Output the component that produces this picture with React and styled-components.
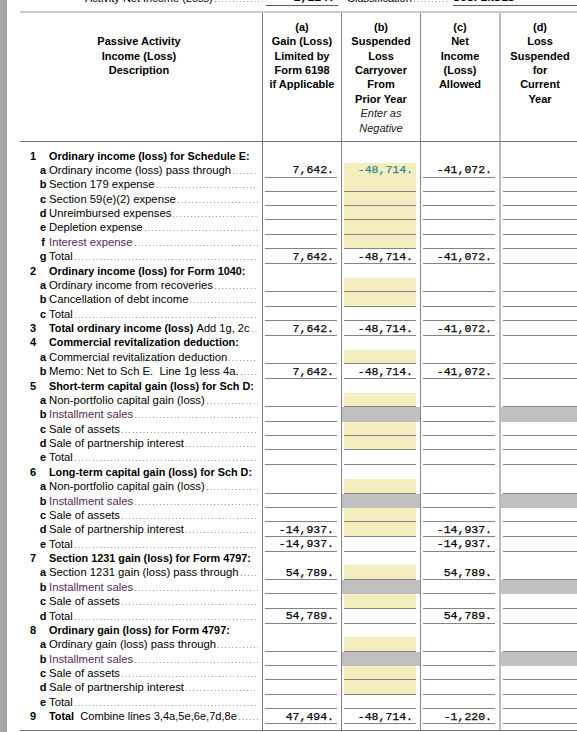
import React from "react";
import styled, { createGlobalStyle } from "styled-components";

const COLS = "242px 79px 79px 79px 80px";
const ROW_H = 14.38;

const SEP = [
  "none",
  "1px solid #7c7c7c",
  "1px solid #858585",
  "1px solid #858585",
  "2px solid #bdbdbd",
];

const BG = { L: "transparent", Y: "#f4eebf", G: "#c0c0c0" };

const STD = "LYLL";
const TOT = "LLLL";
const INST = "LGLG";
const TOTV = ["7,642.", "-48,714.", "-41,072."];

const ROWS = [
  { n: "1", t: "Ordinary income (loss) for Schedule E:" },
  { l: "a", t: "Ordinary income (loss) pass through", k: STD, v: TOTV, teal: 1 },
  { l: "b", t: "Section 179 expense", k: STD },
  { l: "c", t: "Section 59(e)(2) expense", k: STD },
  { l: "d", t: "Unreimbursed expenses", k: STD },
  { l: "e", t: "Depletion expense", k: STD },
  { l: "f", t: "Interest expense", k: STD, purple: true },
  { l: "g", t: "Total", k: TOT, v: TOTV },
  { n: "2", t: "Ordinary income (loss) for Form 1040:" },
  { l: "a", t: "Ordinary income from recoveries", k: STD },
  { l: "b", t: "Cancellation of debt income", k: STD },
  { l: "c", t: "Total", k: TOT },
  { n: "3", t: "Total ordinary income (loss)", note: "\u00a0Add 1g, 2c", k: TOT, v: TOTV },
  { n: "4", t: "Commercial revitalization deduction:" },
  { l: "a", t: "Commercial revitalization deduction", k: STD },
  { l: "b", t: "Memo: Net to Sch E.\u00a0 Line 1g less 4a.", k: TOT, v: TOTV },
  { n: "5", t: "Short-term capital gain (loss) for Sch D:" },
  { l: "a", t: "Non-portfolio capital gain (loss)", k: STD },
  { l: "b", t: "Installment sales", k: INST, purple: true },
  { l: "c", t: "Sale of assets", k: STD },
  { l: "d", t: "Sale of partnership interest", k: STD },
  { l: "e", t: "Total", k: TOT },
  { n: "6", t: "Long-term capital gain (loss) for Sch D:" },
  { l: "a", t: "Non-portfolio capital gain (loss)", k: STD },
  { l: "b", t: "Installment sales", k: INST, purple: true },
  { l: "c", t: "Sale of assets", k: STD },
  { l: "d", t: "Sale of partnership interest", k: STD, v: ["-14,937.", "", "-14,937."] },
  { l: "e", t: "Total", k: TOT, v: ["-14,937.", "", "-14,937."] },
  { n: "7", t: "Section 1231 gain (loss) for Form 4797:" },
  { l: "a", t: "Section 1231 gain (loss) pass through", k: STD, v: ["54,789.", "", "54,789."] },
  { l: "b", t: "Installment sales", k: INST, purple: true },
  { l: "c", t: "Sale of assets", k: STD },
  { l: "d", t: "Total", k: TOT, v: ["54,789.", "", "54,789."] },
  { n: "8", t: "Ordinary gain (loss) for Form 4797:" },
  { l: "a", t: "Ordinary gain (loss) pass through", k: STD },
  { l: "b", t: "Installment sales", k: INST, purple: true },
  { l: "c", t: "Sale of assets", k: STD },
  { l: "d", t: "Sale of partnership interest", k: STD },
  { l: "e", t: "Total", k: TOT },
  { n: "9", t: "Total", note: "\u00a0 Combine lines 3,4a,5e,6e,7d,8e", k: TOT, v: ["47,494.", "-48,714.", "-1,220."] },
];

const HEADS = [
  { lines: ["Passive Activity", "Income (Loss)", "Description"] },
  { lines: ["(a)", "Gain (Loss)", "Limited by", "Form 6198", "if Applicable"] },
  { lines: ["(b)", "Suspended", "Loss", "Carryover", "From", "Prior Year"], note: ["Enter as", "Negative"] },
  { lines: ["(c)", "Net", "Income", "(Loss)", "Allowed"] },
  { lines: ["(d)", "Loss", "Suspended", "for", "Current", "Year"] },
];

const GlobalStyle = createGlobalStyle`
  html, body {
    margin: 0;
    padding: 0;
    background: #fff;
    overflow: hidden;
  }
  body {
    font-family: "Liberation Sans", Arial, sans-serif;
    font-size: 11px;
    color: #000;
  }
`;

const Page = styled.div`
  display: flex;
  width: 577px;
  height: 732px;
  overflow: hidden;
`;

const Rail = styled.div`
  width: 7px;
  flex-shrink: 0;
  background: #a5a5a5;
`;

const Sheet = styled.div`
  flex: 1;
  min-width: 0;
  padding-left: 13px;
`;

const TopStrip = styled.div`
  display: grid;
  grid-template-columns: ${COLS};
  height: 14px;
  margin-top: -9px;
  line-height: 14px;
  white-space: nowrap;
`;

const TopLabel = styled.div`
  display: flex;
  padding: 0 0 0 65px;
  width: ${(p) => p.$w || "auto"};
  flex-shrink: 0;
  box-sizing: border-box;
`;

const TopGroup = styled.div`
  grid-column: 3 / 6;
  display: flex;
  padding-left: 6px;
`;

const TopField = styled.div`
  flex: 1;
  margin: ${(p) => p.$m};
  border-bottom: 1px solid #5e5e5e;
  font-family: "Liberation Mono", "Courier New", monospace;
  font-weight: bold;
  font-size: 11.5px;
  text-align: ${(p) => p.$align};
  padding-right: 3px;
`;

const Table = styled.div`
  margin-top: 6px;
  border-top: 2px solid #cbcbcb;
  border-bottom: 1px solid #767676;
`;

const Grid = styled.div`
  display: grid;
  grid-template-columns: ${COLS};
  height: ${(p) => p.$h}px;
  border-bottom: ${(p) => (p.$ruled ? "1px solid #747474" : "none")};
`;

const HeadCell = styled.div`
  border-left: ${(p) => SEP[p.$col]};
  text-align: center;
  font-weight: bold;
  line-height: 14.4px;
  padding-top: ${(p) => (p.$col === 0 ? "21.2px" : "6.8px")};
  padding-right: ${(p) => (p.$col === 0 ? "4px" : "0")};
  white-space: nowrap;
`;

const HeadNote = styled.div`
  font-style: italic;
  font-weight: normal;
  color: #222;
`;

const Cell = styled.div`
  border-left: ${(p) => SEP[p.$col]};
  display: flex;
  min-width: 0;
`;

const Field = styled.div`
  flex: 1;
  min-width: 0;
  box-sizing: border-box;
  margin: ${(p) => (p.$kind === "G" ? "0" : p.$col === 4 ? "0 0 0 2px" : "0 4px 0 2px")};
  background: ${(p) => BG[p.$kind]};
  border-bottom: ${(p) => (p.$kind === "G" ? "none" : "1px solid #848484")};
  font-family: "Liberation Mono", "Courier New", monospace;
  font-size: 11.5px;
  line-height: 13.4px;
  padding: 0.6px 3px 0 0;
  text-align: right;
  white-space: nowrap;
  color: ${(p) => (p.$teal ? "#2a8d8d" : "#000")};
  -webkit-text-stroke: 0.25px ${(p) => (p.$teal ? "#2a8d8d" : "#000")};
`;

const Desc = styled.div`
  display: flex;
  align-items: baseline;
  padding: 0 4px 0 10px;
  line-height: ${ROW_H}px;
  white-space: nowrap;
  overflow: hidden;
`;

const Num = styled.span`
  width: 8px;
  flex-shrink: 0;
  font-weight: bold;
`;

const Letter = styled.span`
  width: 10px;
  flex-shrink: 0;
  text-align: center;
  font-weight: bold;
`;

const Label = styled.span`
  margin-left: 1px;
  font-weight: ${(p) => (p.$bold ? "bold" : "normal")};
  font-size: ${(p) => (p.$bold ? "10.85px" : "11.3px")};
  color: ${(p) => (p.$purple ? "#552a55" : "#000")};
`;

const Note = styled.span`
  font-weight: normal;
  font-size: 11.1px;
`;

const Leader = styled.span`
  flex: 1;
  align-self: stretch;
  margin-left: 1px;
  min-width: 4px;
  background-image: linear-gradient(to right, #8a8a8a 1px, transparent 1px);
  background-size: 3.6px 1px;
  background-repeat: repeat-x;
  background-position: 1px 10px;
`;

function Spacer({ h }) {
  return (
    <Grid $h={h}>
      {[0, 1, 2, 3, 4].map((c) => (
        <Cell key={c} $col={c} />
      ))}
    </Grid>
  );
}

function LineRow({ row }) {
  const heading = !row.l;
  return (
    <Grid $h={ROW_H}>
      <Desc>
        <Num>{row.n}</Num>
        <Letter>{row.l}</Letter>
        <Label $bold={heading} $purple={row.purple}>
          {row.t}
          {row.note && <Note>{row.note}</Note>}
        </Label>
        {row.k && <Leader />}
      </Desc>
      {[0, 1, 2, 3].map((i) => {
        const kind = row.k ? row.k[i] : "N";
        return (
          <Cell key={i} $col={i + 1}>
            {kind !== "N" && (
              <Field $kind={kind} $col={i + 1} $teal={row.teal && i === 1}>
                {row.v && row.v[i]}
              </Field>
            )}
          </Cell>
        );
      })}
    </Grid>
  );
}

export default function App() {
  return (
    <Page>
      <GlobalStyle />
      <Rail />
      <Sheet>
        <TopStrip>
          <TopLabel>
            Activity Net Income (Loss)
            <Leader />
          </TopLabel>
          <TopField $m="0 3px 0 4px" $align="right">
            1,114.
          </TopField>
          <TopGroup>
            <TopLabel $w="106px" style={{ paddingLeft: 0, paddingRight: 3 }}>
              Classification
              <Leader />
            </TopLabel>
            <TopField $m="0" $align="left">
              SUSPENDED
            </TopField>
          </TopGroup>
        </TopStrip>
        <Table>
          <Grid $h={128} $ruled>
            {HEADS.map((h, c) => (
              <HeadCell key={c} $col={c}>
                {h.lines.map((ln) => (
                  <div key={ln}>{ln}</div>
                ))}
                {h.note && h.note.map((ln) => <HeadNote key={ln}>{ln}</HeadNote>)}
              </HeadCell>
            ))}
          </Grid>
          <Spacer h={6.5} />
          {ROWS.map((row, i) => (
            <LineRow key={i} row={row} />
          ))}
          <Spacer h={6.3} />
        </Table>
      </Sheet>
    </Page>
  );
}
